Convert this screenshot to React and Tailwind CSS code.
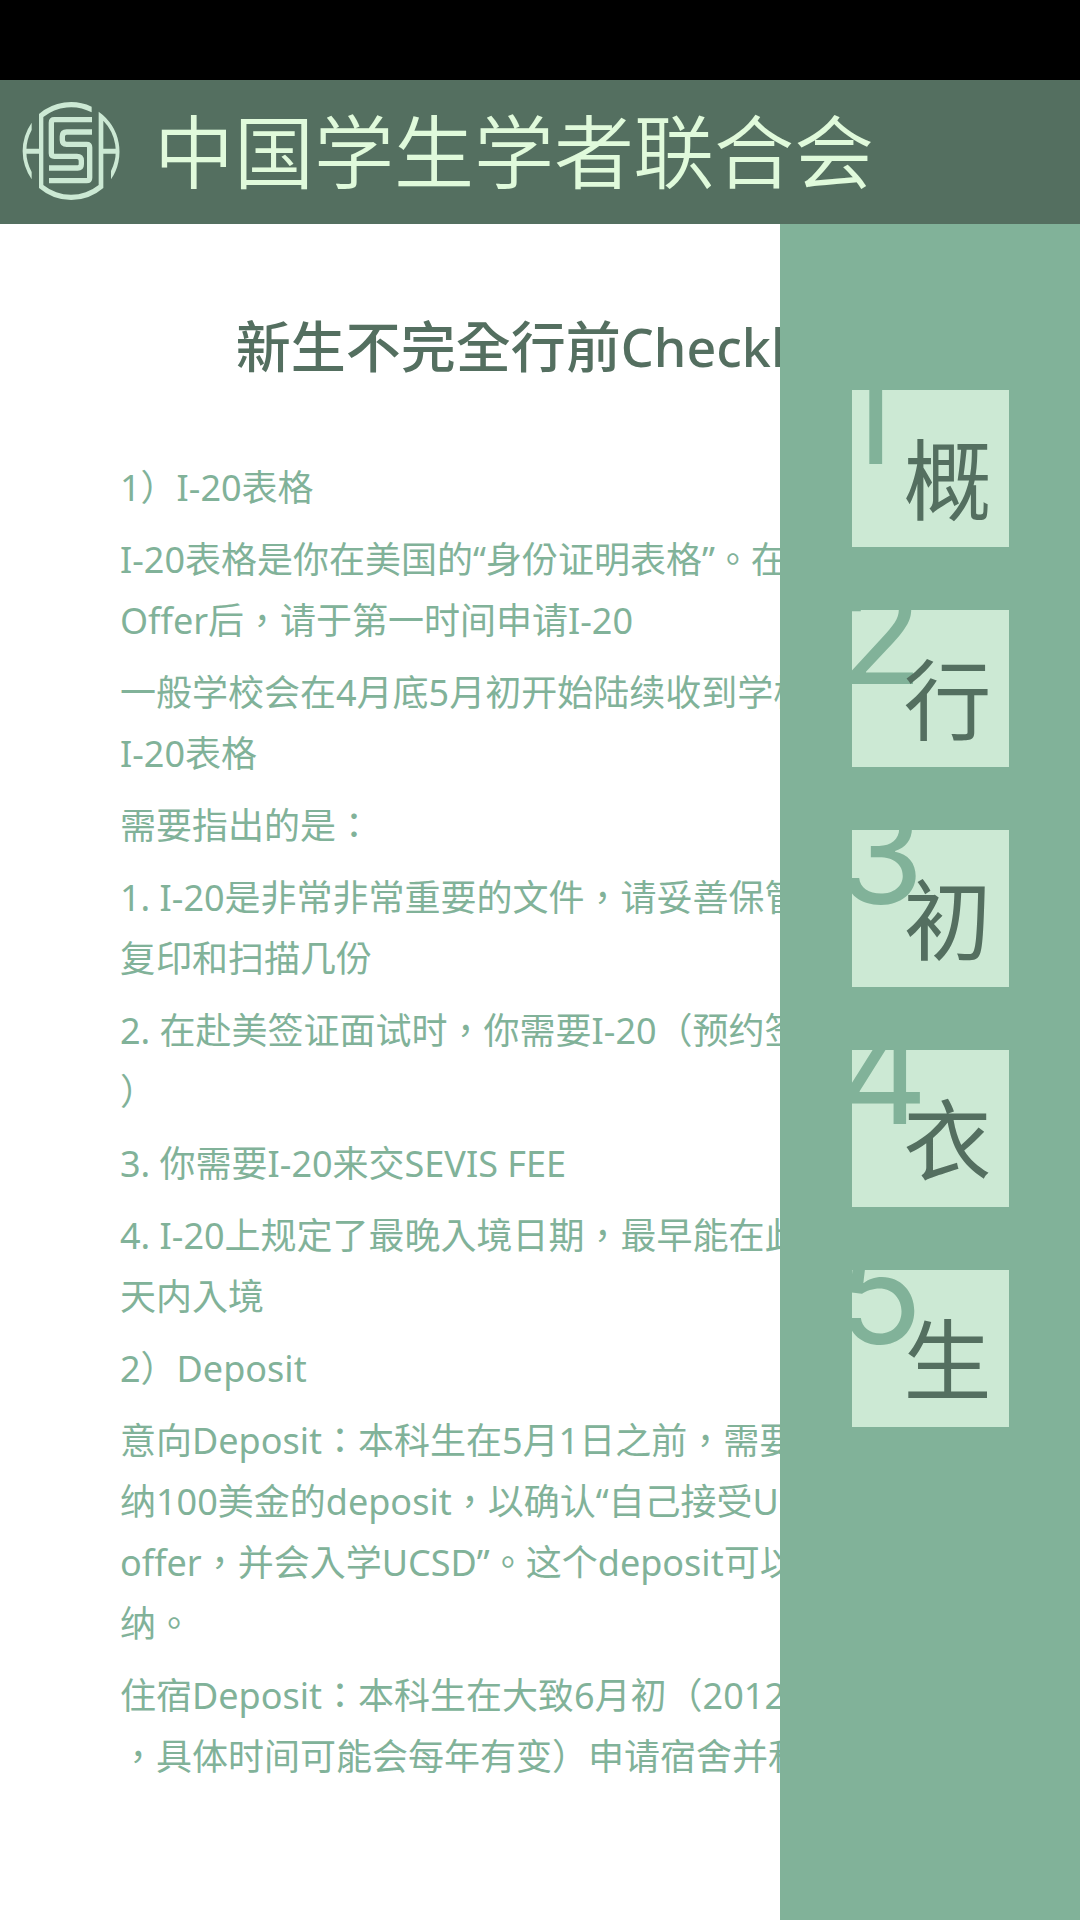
const SECTIONS = [
  { number: '1', label: '概' },
  { number: '2', label: '行' },
  { number: '3', label: '初' },
  { number: '4', label: '衣' },
  { number: '5', label: '生' },
];

const PARAGRAPHS = [
  ['1）I-20表格'],
  ['I-20表格是你在美国的“身份证明表格”。在', 'Offer后，请于第一时间申请I-20'],
  ['一般学校会在4月底5月初开始陆续收到学校', 'I-20表格'],
  ['需要指出的是：'],
  ['1. I-20是非常非常重要的文件，请妥善保管', '复印和扫描几份'],
  ['2. 在赴美签证面试时，你需要I-20（预约签', '）'],
  ['3. 你需要I-20来交SEVIS FEE'],
  ['4. I-20上规定了最晚入境日期，最早能在此', '天内入境'],
  ['2）Deposit'],
  [
    '意向Deposit：本科生在5月1日之前，需要',
    '纳100美金的deposit，以确认“自己接受U',
    'offer，并会入学UCSD”。这个deposit可以',
    '纳。',
  ],
  ['住宿Deposit：本科生在大致6月初（2012', '，具体时间可能会每年有变）申请宿舍并和'],
];

function Logo() {
  return (
    <svg viewBox="60 30 306 306" className="size-[102px] shrink-0" fill="#cce9d4" aria-hidden="true">
      <path d="M117 72A147 147 0 0 1 275 50V67A132 132 0 0 0 130 81V285A132 132 0 0 0 296 285V65A147 147 0 0 1 333 268V243A132 132 0 0 0 310 92V294A147 147 0 0 1 117 294Z" />
      <path d="M95 98A147 147 0 0 0 95 268V246A132 132 0 0 1 95 120Z" />
      <path d="M74 176H120V191H74ZM306 176H352V191H306Z" />
      <g fill="none" stroke="#cce9d4" strokeWidth="16">
        <path d="M276 89H163Q154 89 154 98V190Q154 199 163 199H231Q244 199 244 212V223Q244 234 233 234H147" />
        <path d="M276 126H200Q187 126 187 139V150Q187 163 200 163H260Q269 163 269 172V263Q269 272 260 272H147" />
      </g>
    </svg>
  );
}

function Tile({ number, label }) {
  return (
    <button
      type="button"
      className="relative size-[157px] overflow-hidden bg-[#cce9d4] text-left"
    >
      <span className="absolute -top-[52px] -left-[14px] font-['Inter',sans-serif] text-[140px] leading-[150px] text-[#81b299]">
        {number}
      </span>
      <span className="absolute right-[17px] bottom-[20px] text-[88px] leading-[96px] text-[#546f60]">
        {label}
      </span>
    </button>
  );
}

export default function App() {
  return (
    <div
      lang="zh-Hant"
      className="flex min-h-screen flex-col overflow-hidden bg-white font-['Noto_Sans','Noto_Sans_CJK_TC',sans-serif]"
    >
      <div className="h-20 bg-black" />
      <header className="flex h-36 items-center gap-8 bg-[#546f60] px-5 pb-0.5">
        <Logo />
        <span className="text-[80px] leading-none font-[350] whitespace-nowrap text-[#e0fadb]">
          中国学生学者联合会
        </span>
      </header>
      <main className="relative flex-1">
        <article className="px-[120px] pt-[80px] pb-12">
          <h1 className="mb-[68px] text-center text-[55px] leading-[84px] font-medium whitespace-nowrap text-[#546f60]">
            新生不完全行前<span className="text-[52px]">Checklist</span>
          </h1>
          <div className="flex flex-col gap-[11px] text-[36px] leading-[61px] text-[#81b299]">
            {PARAGRAPHS.map((lines, i) => (
              <p key={i}>
                {lines.map((line) => (
                  <span key={line} className="block whitespace-nowrap">
                    {line}
                  </span>
                ))}
              </p>
            ))}
          </div>
        </article>
        <nav className="absolute inset-y-0 right-0 flex w-[300px] flex-col items-center gap-[63px] bg-[#81b299] pt-[166px]">
          {SECTIONS.map((s) => (
            <Tile key={s.number} {...s} />
          ))}
        </nav>
      </main>
    </div>
  );
}
